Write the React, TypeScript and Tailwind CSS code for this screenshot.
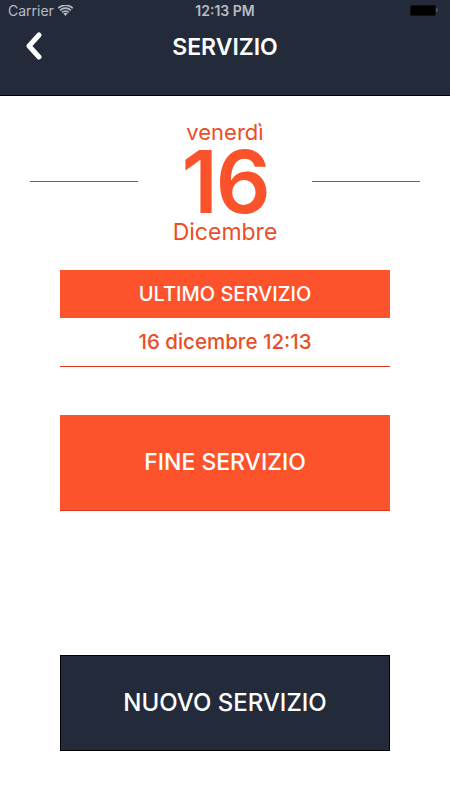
import React from 'react';

const orange = 'bg-[#fd532d]';

const StatusBar: React.FC = () => (
  <div className="relative h-5 flex items-center px-2 text-[14px] text-[#b8bcc4]">
    <span className="flex items-center gap-1">
      Carrier
      <svg width="15" height="11" viewBox="0 0 15 11" fill="#b8bcc4">
        <path d="M7.5 11 5.4 8.6a3 3 0 0 1 4.2 0z" />
        <path d="M3.6 6.8a5.5 5.5 0 0 1 7.8 0l-1.1 1.2a4 4 0 0 0-5.6 0z" />
        <path d="M1.6 4.7a8.4 8.4 0 0 1 11.8 0l-1.1 1.2a6.8 6.8 0 0 0-9.6 0z" />
        <path d="M-.3 2.6a11.2 11.2 0 0 1 15.6 0l-1.1 1.2a9.6 9.6 0 0 0-13.4 0z" />
      </svg>
    </span>
    <span className="absolute left-1/2 -translate-x-1/2 font-semibold text-[14px]">12:13 PM</span>
    <span className="ml-auto flex items-center mr-1">
      <span className="w-[26px] h-[11px] rounded-[2px] bg-black border border-[#111]" />
      <span className="w-[2px] h-[4px] bg-[#555] rounded-r-sm" />
    </span>
  </div>
);

const App: React.FC = () => {
  return (
    <div className="w-[450px] h-[800px] bg-white flex flex-col" style={{ fontFamily: 'Inter, "Noto Sans", sans-serif' }}>
      <div className="bg-[#232b3b] h-[96px] border-b border-black flex flex-col">
        <StatusBar />
        <div className="relative h-[56px] flex items-center justify-center">
          <svg className="absolute left-[24px] top-[12px]" width="20" height="28" viewBox="0 0 20 28" fill="none">
            <path d="M15 3 5 14l10 11" stroke="white" strokeWidth="5" strokeLinecap="round" strokeLinejoin="round" />
          </svg>
          <span className="text-white text-[23px] font-semibold -mt-[2px]">SERVIZIO</span>
        </div>
      </div>

      <div className="flex flex-col items-center text-[#ea4e27]">
        <div className="text-[22px] leading-[24px] mt-[24px]">venerdì</div>
        <div className="w-full flex items-center justify-between px-[30px]">
          <div className="w-[108px] h-px bg-[#d9381c] -mt-[2px]" />
          <div className="text-[86px] font-semibold leading-[76px] tracking-tight text-[#fa532c]">16</div>
          <div className="w-[108px] h-px bg-[#d9381c] -mt-[2px]" />
        </div>
        <div className="text-[23px] leading-[24px]">Dicembre</div>

        <div className="w-[330px] mt-[26px] flex flex-col">
          <div className={`${orange} h-[48px] flex items-center justify-center text-white text-[20px] font-medium`}>ULTIMO SERVIZIO</div>
          <div className="h-[49px] flex items-center justify-center border-b border-[#d9381c] text-[20.5px] font-medium">
            16 dicembre 12:13
          </div>
        </div>

        <button className={`${orange} w-[330px] h-[96px] mt-[48px] flex items-center justify-center text-white text-[23px] font-medium border-b border-[#d9381c]`}>
          FINE SERVIZIO
        </button>

        <button className="w-[330px] h-[96px] mt-[144px] bg-[#232b3b] border border-black flex items-center justify-center text-white text-[24px] font-medium">
          NUOVO SERVIZIO
        </button>
      </div>
    </div>
  );
};

export default App;
